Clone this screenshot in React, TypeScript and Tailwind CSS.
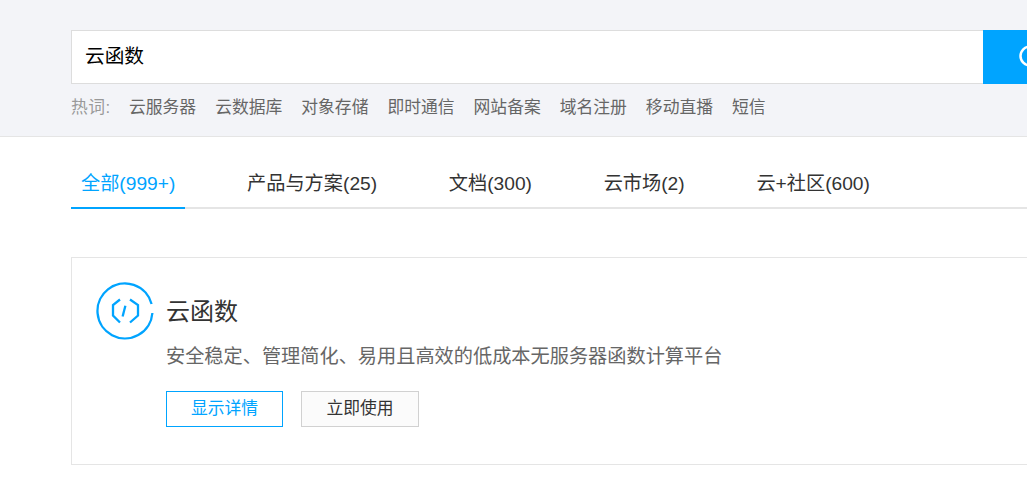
const font = "font-['Liberation_Sans','Noto_Sans_CJK_SC',sans-serif]";

const hotWords = ["云服务器", "云数据库", "对象存储", "即时通信", "网站备案", "域名注册", "移动直播", "短信"];

const tabs = [
  { label: "全部(999+)", active: true },
  { label: "产品与方案(25)" },
  { label: "文档(300)" },
  { label: "云市场(2)" },
  { label: "云+社区(600)" },
];

function ScfIcon() {
  return (
    <svg width="58" height="58" viewBox="0 0 58 58" fill="none" stroke="#00a4ff" strokeWidth="2.3" className="shrink-0">
      <path d="M55.6 22A27.5 27.5 0 1 0 56.4 31" />
      <path d="M24 17.5 17 23v10.5L24 40.5" />
      <path d="M34 17.5 42 23v10.5L34 40.5" />
      <path d="M29.4 23.8 26.6 34.5" />
    </svg>
  );
}

export default function App() {
  return (
    <div className={`h-[479px] w-[1027px] overflow-hidden bg-white ${font}`}>
      <div className="h-[137px] border-b border-[#e5e5e5] bg-[#f3f4f8] pt-[30px] pl-[71px]">
        <div className="flex w-[1000px]">
          <div className="flex h-[54px] w-[912px] items-center border border-r-0 border-[#dddddd] bg-white pl-[13px] text-[19.7px] text-black">
            云函数
          </div>
          <div className="flex h-[54px] w-[88px] items-center bg-[#00a4ff] pl-[36px]">
            <svg width="24" height="24" viewBox="0 0 24 24" fill="none" stroke="white" strokeWidth="2.5" className="shrink-0">
              <circle cx="11" cy="11" r="9.5" />
              <path d="M18 18l5 5" />
            </svg>
          </div>
        </div>
        <div className="mt-[12px] flex items-center text-[16.8px] leading-[24px] text-[#666666]">
          <span className="mr-[18px] w-[40px] tracking-[0.5px] text-[#999999]">热词:</span>
          <div className="flex gap-[19px]">
            {hotWords.map((w) => (
              <span key={w}>{w}</span>
            ))}
          </div>
        </div>
      </div>

      <div className="pl-[71px]">
        <div className="mt-[24px] flex h-[48px] w-[1000px] gap-[51.7px] border-b-2 border-[#e5e5e5] text-[19.2px]">
          {tabs.map((t) => (
            <div
              key={t.label}
              className={
                t.active
                  ? "-mb-[2px] h-[48px] border-b-2 border-[#00a4ff] px-[10px] leading-[46px] text-[#00a4ff]"
                  : "h-[46px] px-[10px] leading-[46px] text-[#333333]"
              }
            >
              {t.label}
            </div>
          ))}
        </div>

        <div className="mt-[48px] flex h-[208px] w-[1000px] gap-[12px] border border-[#e5e5e5] pt-[24px] pl-[24px]">
          <ScfIcon />
          <div>
            <div className="mt-[10px] text-[24px] leading-[40px] text-[#333333]">云函数</div>
            <div className="mt-[11px] text-[19.2px] leading-[28px] text-[#666666]">
              安全稳定、管理简化、易用且高效的低成本无服务器函数计算平台
            </div>
            <div className="mt-[20px] flex gap-[18px]">
              <div className="flex h-[36px] w-[117px] items-center justify-center border border-[#00a4ff] text-[16.8px] text-[#00a4ff]">
                显示详情
              </div>
              <div className="flex h-[36px] w-[118px] items-center justify-center border border-[#d1d1d1] bg-[#fbfbfb] text-[16.8px] text-[#333333]">
                立即使用
              </div>
            </div>
          </div>
        </div>
      </div>
    </div>
  );
}
